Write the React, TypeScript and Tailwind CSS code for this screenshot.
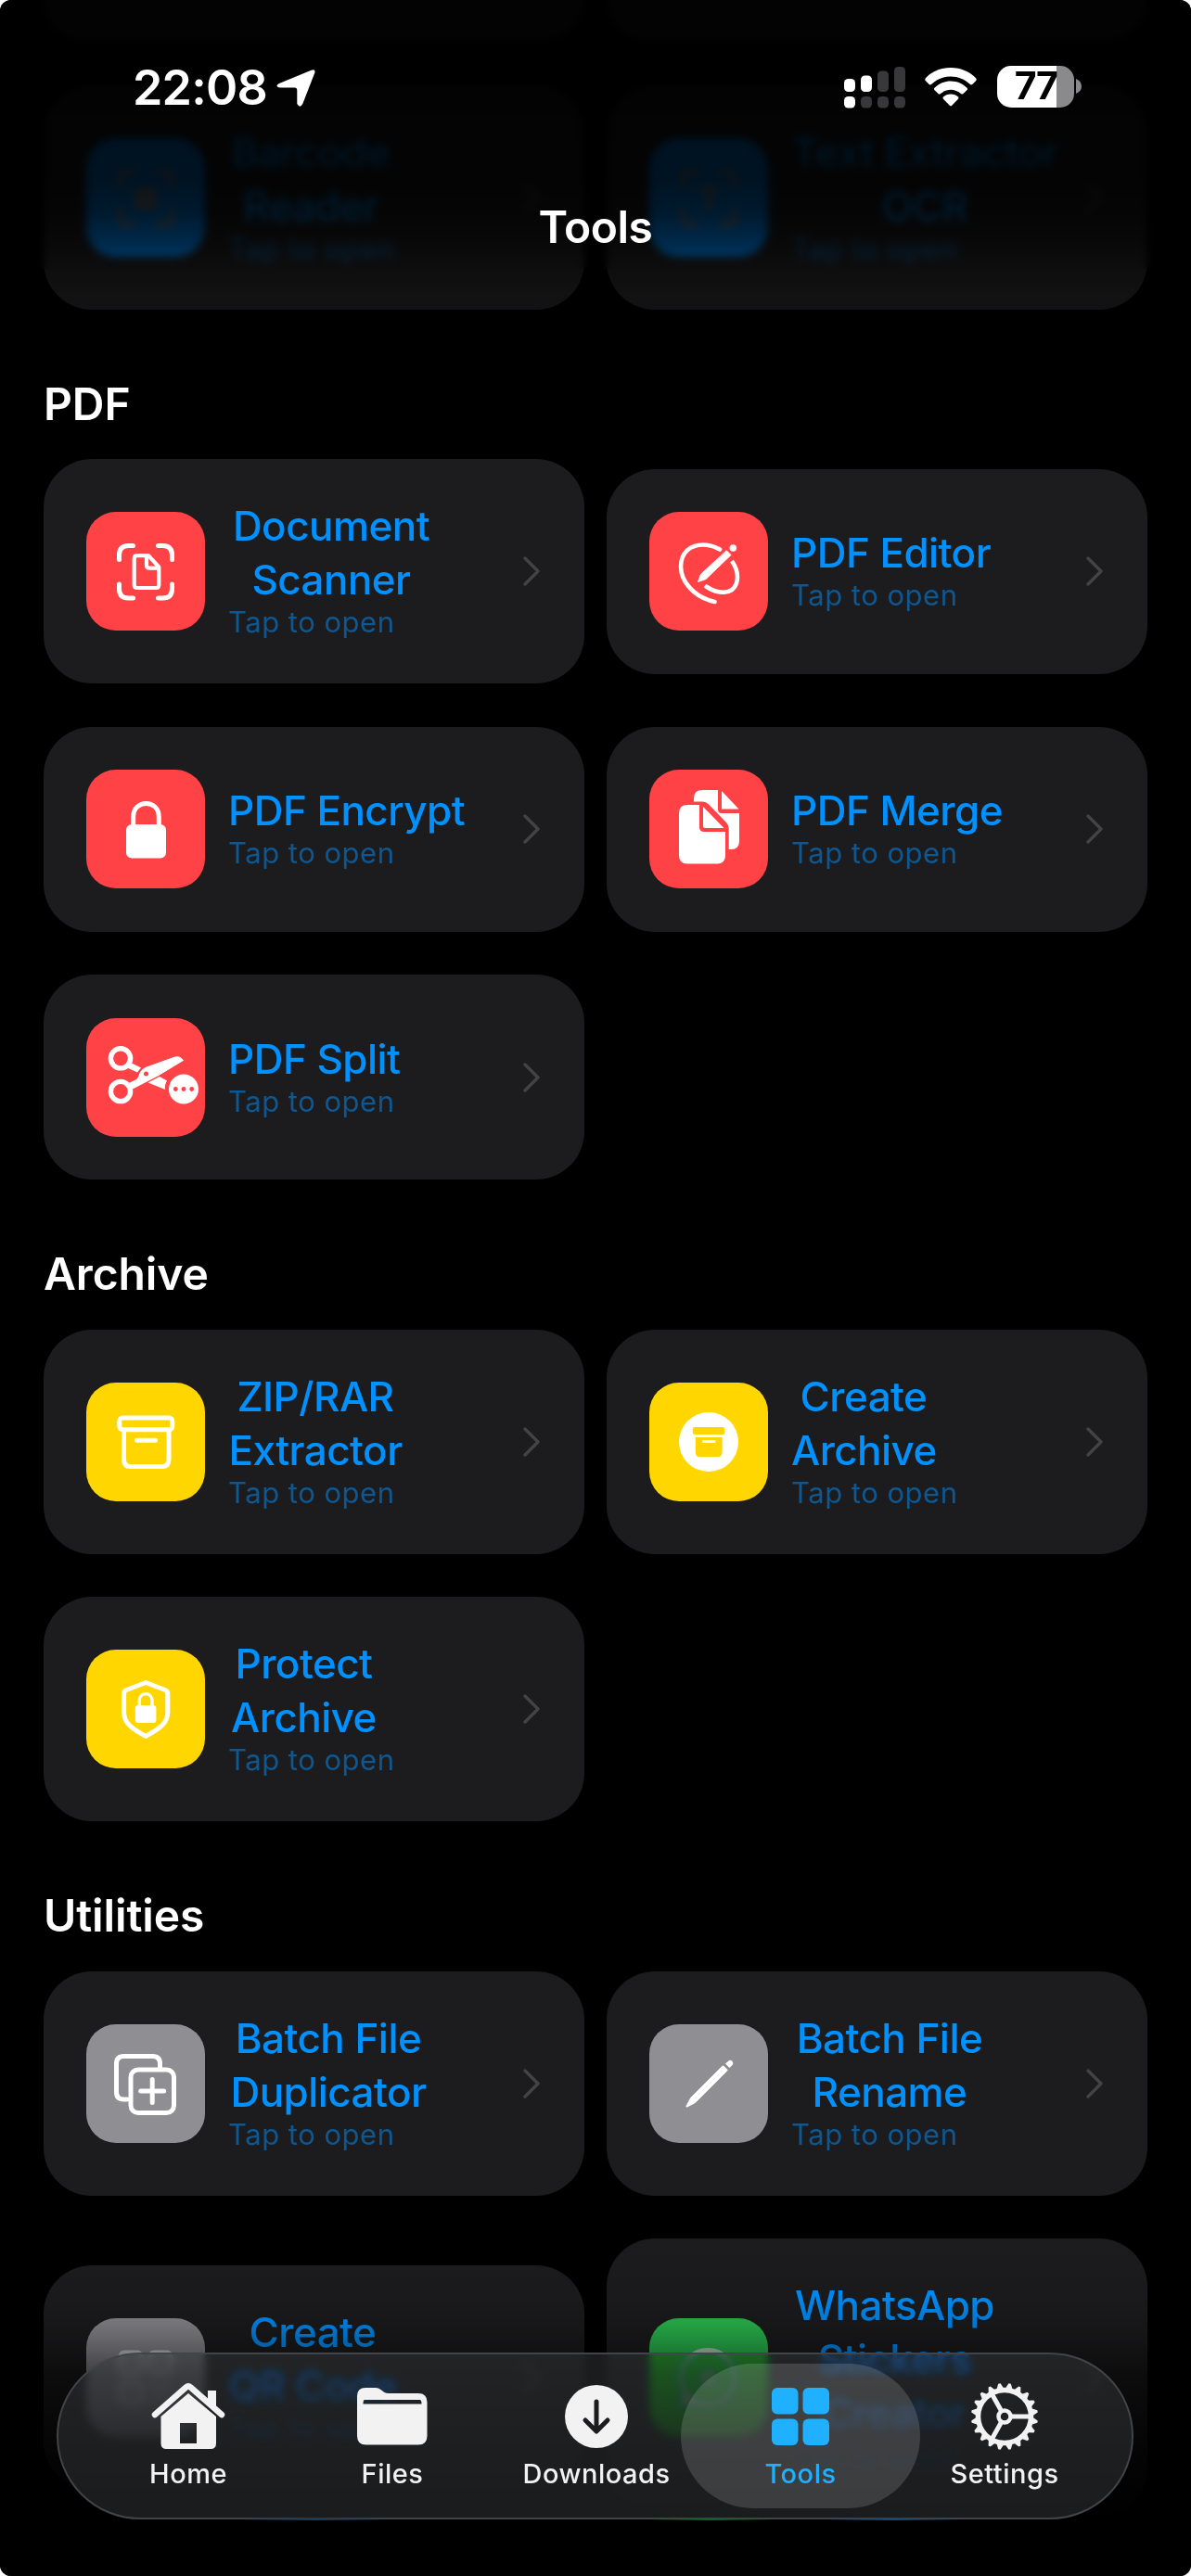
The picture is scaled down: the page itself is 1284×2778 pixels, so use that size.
import React from 'react'

const Scanner = () => (
  <g fill="none" stroke="white" strokeWidth="5" strokeLinecap="round" strokeLinejoin="round">
    <path d="M35.5 51.5V46.5Q35.5 36.5 45.5 36.5H50.5M77.5 36.5H82.5Q92.5 36.5 92.5 46.5V51.5M92.5 78V83Q92.5 93 82.5 93H77.5M50.5 93H45.5Q35.5 93 35.5 83V78" />
    <path strokeWidth="4.2" d="M65 47.2H55Q51.7 47.2 51.7 50.5V78.7Q51.7 82 55 82H75Q78.3 82 78.3 78.7V59.5L67 47.2ZM65 47.5V57.5Q65 60.7 68.2 60.7H78" />
  </g>
)

const Editor = () => (
  <g fill="none" stroke="white" strokeWidth="4.6" strokeLinecap="round">
    <path d="M70.5 97C48 92 34 75 34 59C34 44 44 35.5 58 35.5C65 35.5 71 37.5 76 40.5" />
    <path d="M89 53C94 60 96.5 68 94 77C90 89 74 90 60 79.5" strokeLinecap="butt" />
    <path d="M83.5 42L88 46.5L61 72.5L52.5 75.5L55.5 67.5Z" fill="white" strokeWidth="1" strokeLinejoin="round" />
    <circle cx="90.3" cy="39" r="3.8" fill="white" stroke="none" />
  </g>
)

const Lock = () => (
  <g>
    <rect x="43" y="59" width="43" height="36.5" rx="6" fill="white" />
    <path d="M50.7 61V51C50.7 31.5 78.3 31.5 78.3 51V61" fill="none" stroke="white" strokeWidth="5" />
  </g>
)

const Merge = () => (
  <g fill="white">
    <path d="M48 34.5V31Q48 22 57 22H74V43Q74 47 78 47H97V77Q97 86 88 86H85.7V63.5Q85.7 60 83 57L64 37.5Q61 34.3 57 34.5Z" />
    <path d="M78 23L96.5 42.5H78Z" />
    <path d="M41 38H54V62Q54 67 59 67H82V92.5Q82 101.5 73 101.5H41Q32 101.5 32 92.5V47Q32 38 41 38Z" />
    <path d="M58 40L80.5 63H60Q58 63 58 61Z" />
  </g>
)

const Split = () => (
  <g>
    <g fill="none" stroke="white" strokeWidth="5.4">
      <circle cx="37" cy="43.3" r="10.6" />
      <circle cx="37" cy="79" r="10.6" />
    </g>
    <path
      d="M45 71L54 66.5Q56 65.5 57 62Q58.5 55.5 65 53L95 42.2Q101 40.5 104.5 45.5L78 61.5L48 77Z"
      fill="white"
      stroke="white"
      strokeLinejoin="round"
    />
    <path d="M46 47L59 53.5L55 58.5L43 53Z" fill="white" />
    <path d="M66.5 69.5L79 63L87 67.5Q84.5 71 85 77Z" fill="white" />
    <circle cx="64.5" cy="60" r="2.5" fill="#ff4245" />
    <circle cx="105" cy="76.5" r="16" fill="white" />
    <g fill="#ff4245">
      <circle cx="96.3" cy="76.5" r="2.4" />
      <circle cx="105" cy="76.5" r="2.4" />
      <circle cx="113.7" cy="76.5" r="2.4" />
    </g>
  </g>
)

const Box = () => (
  <g fill="none" stroke="white" strokeWidth="5" strokeLinecap="round">
    <rect x="35.8" y="38" width="57" height="12.8" rx="3.5" />
    <path d="M40.5 52V83Q40.5 90.5 48 90.5H81.5Q89 90.5 89 83V52M54.5 62.3H74.5" />
  </g>
)

const BoxCircle = () => (
  <g>
    <circle cx="64" cy="64" r="32" fill="white" />
    <g fill="#ffd600">
      <rect x="46.8" y="48" width="34.5" height="8" rx="2.5" />
      <path d="M49.8 59H78.6V75Q78.6 80.3 73.3 80.3H55Q49.8 80.3 49.8 75Z" />
    </g>
    <rect x="57" y="62" width="14.5" height="3" rx="1.2" fill="white" />
  </g>
)

const ShieldLock = () => (
  <g>
    <path
      d="M64.2 35.5L85 43.5Q87.8 44.6 87.8 47.5V68C87.8 82 73 88 64.2 93.5C55.5 88 40.6 82 40.6 68V47.5Q40.6 44.6 43.4 43.5Z"
      fill="none"
      stroke="white"
      strokeWidth="5"
      strokeLinejoin="round"
    />
    <rect x="52.8" y="60" width="22.6" height="19" rx="3" fill="white" />
    <path d="M57.2 61V55.5C57.2 45 71 45 71 55.5V61" fill="none" stroke="white" strokeWidth="3.3" />
  </g>
)

const Duplicate = () => (
  <g fill="none" stroke="white" strokeWidth="5" strokeLinecap="round">
    <path d="M44 81H40.5Q32.5 81 32.5 73V42.5Q32.5 34.5 40.5 34.5H71.5Q79.5 34.5 79.5 42.5V46" />
    <rect x="48" y="49" width="46.5" height="46.5" rx="8" />
    <path d="M71.2 59.5V84.5M58.7 72H83.7" />
  </g>
)

const Pencil = () => (
  <g fill="white" stroke="white" strokeLinejoin="round">
    <path d="M79.5 45.5L83.5 49.5L49 84L40.5 88.5L45 80Z" strokeWidth="2" />
    <path d="M83 42.5L86 40Q87.5 39 89 40.5Q90.2 42 89 43.5L86.5 46Z" strokeWidth="1.5" />
  </g>
)

const QrCode = () => (
  <g fill="none" stroke="#d0d0d2" strokeWidth="5">
    <rect x="37" y="37" width="22" height="22" rx="4" />
    <rect x="69" y="37" width="22" height="22" rx="4" />
    <rect x="37" y="69" width="22" height="22" rx="4" />
    <path d="M46 48h4M78 48h4M46 80h4M69 72h6M84 72h6M76 80h7M69 89h6M84 89h6" />
  </g>
)

const Chat = () => (
  <g>
    <circle cx="63" cy="64" r="29" fill="none" stroke="#b9d8c0" strokeWidth="6" />
    <path d="M36 80L32 97L49 92Z" fill="#b9d8c0" />
    <circle cx="63" cy="64" r="12" fill="#7fc891" />
  </g>
)

const BarcodeScan = () => (
  <g fill="none" stroke="#6f7f8c" strokeWidth="6" strokeLinecap="round">
    <path d="M36 52V44Q36 36 44 36H50M78 36H84Q92 36 92 44V52M92 77V85Q92 93 84 93H78M50 93H44Q36 93 36 85V77" />
    <rect x="55" y="56" width="18" height="18" fill="#6f7f8c" />
  </g>
)

const TextScan = () => (
  <g fill="none" stroke="#6f7f8c" strokeWidth="6" strokeLinecap="round">
    <path d="M36 52V44Q36 36 44 36H50M78 36H84Q92 36 92 44V52M92 77V85Q92 93 84 93H78M50 93H44Q36 93 36 85V77" />
    <path d="M54 54H74M64 54V76" />
  </g>
)

type Tool = {
  lines: string[]
  width?: string
  color: string
  icon: () => React.ReactElement
}

const scanTools: Tool[] = [
  { lines: ['Barcode', 'Reader'], width: 'w-[178px]', color: 'bg-[#0080e8]', icon: BarcodeScan },
  { lines: ['Text Extractor', 'OCR'], width: 'w-[288px]', color: 'bg-[#0080e8]', icon: TextScan },
]

const sections: { title: string; tools: Tool[] }[] = [
  {
    title: 'PDF',
    tools: [
      { lines: ['Document', 'Scanner'], width: 'w-[222px]', color: 'bg-[#ff4245]', icon: Scanner },
      { lines: ['PDF Editor'], color: 'bg-[#ff4245]', icon: Editor },
      { lines: ['PDF Encrypt'], color: 'bg-[#ff4245]', icon: Lock },
      { lines: ['PDF Merge'], color: 'bg-[#ff4245]', icon: Merge },
      { lines: ['PDF Split'], color: 'bg-[#ff4245]', icon: Split },
    ],
  },
  {
    title: 'Archive',
    tools: [
      { lines: ['ZIP/RAR', 'Extractor'], width: 'w-[188px]', color: 'bg-[#ffd600]', icon: Box },
      { lines: ['Create', 'Archive'], width: 'w-[156px]', color: 'bg-[#ffd600]', icon: BoxCircle },
      { lines: ['Protect', 'Archive'], width: 'w-[163px]', color: 'bg-[#ffd600]', icon: ShieldLock },
    ],
  },
  {
    title: 'Utilities',
    tools: [
      { lines: ['Batch File', 'Duplicator'], width: 'w-[216px]', color: 'bg-[#8e8e93]', icon: Duplicate },
      { lines: ['Batch File', 'Rename'], width: 'w-[212px]', color: 'bg-[#8e8e93]', icon: Pencil },
      { lines: ['Create', 'QR Code'], width: 'w-[182px]', color: 'bg-[#8e8e93]', icon: QrCode },
      { lines: ['WhatsApp', 'Stickers', 'Creator'], width: 'w-[223px]', color: 'bg-[#2cc452]', icon: Chat },
    ],
  },
]

function ToolCard({ tool }: { tool: Tool }) {
  const Icon = tool.icon
  return (
    <div className="flex min-h-[221px] items-center rounded-[52px] bg-[#1c1c1e] px-[46px] py-[46px]">
      <div className={`size-32 shrink-0 rounded-[32px] ${tool.color}`}>
        <svg viewBox="0 0 128 128" className="size-32">
          <Icon />
        </svg>
      </div>
      <div className="-mt-[3px] mb-[3px] ml-[25px] flex-1 whitespace-nowrap">
        <div className={`text-[44px] leading-[58px] font-medium tracking-[-0.55px] text-[#0091ff] ${tool.width ? `text-center ${tool.width}` : ''}`}>
          {tool.lines.map((line) => (
            <div key={line}>{line}</div>
          ))}
        </div>
        <div className="text-[31px] leading-[34px] tracking-[0.5px] text-[#0f5790]">Tap to open</div>
      </div>
      <svg viewBox="0 0 20 32" className="h-8 w-5 shrink-0" fill="none" stroke="#434346" strokeWidth="3.4" strokeLinecap="round" strokeLinejoin="round">
        <path d="M2 2L16 16L2 30" />
      </svg>
    </div>
  )
}

function StatusBar() {
  return (
    <div className="flex h-[140px] items-start pt-[66px] text-white">
      <span className="ml-[143px] text-[52px] leading-[58px] font-semibold tracking-[-0.8px]">22:08</span>
      <svg viewBox="0 0 42 40" className="mt-[9px] ml-2.5 h-10 w-[42px]" fill="white">
        <path d="M37.500 .8Q42.500 -1.200 41.300 3.500L28.500 36.500Q25.500 42.500 22.300 37V22Q22.300 19.500 20 19.500H4Q-2.500 18 3 15Z" />
      </svg>
      <svg viewBox="0 0 68 46" className="mt-[4.5px] ml-auto h-[46px] w-[68px]">
        <g fill="white">
          <rect x="1" y="14" width="12" height="14" rx="4.500" />
          <rect x="19" y="10.5" width="12" height="17.5" rx="4.500" />
          <rect x="1" y="33" width="12" height="12.5" rx="4.500" />
        </g>
        <g fill="#38383a">
          <rect x="37" y="5.5" width="12" height="22.5" rx="4.500" />
          <rect x="55" y="1" width="12" height="27" rx="4.500" />
          <rect x="19" y="33" width="12" height="12.5" rx="4.500" />
          <rect x="37" y="33" width="12" height="12.5" rx="4.500" />
          <rect x="55" y="33" width="12" height="12.5" rx="4.500" />
        </g>
      </svg>
      <svg viewBox="0 0 56 42" className="mt-[7px] ml-5 h-[42px] w-14" fill="white">
        <path d="M28 0C39 0 49 4.5 55.3 11.5Q56.3 13 55 14.3L51.3 18Q50 19 48.700 17.8C43 12.500 36 9.500 28 9.500S13 12.500 7.300 17.800Q6 19 4.700 18L1 14.300Q-.3 13 .7 11.500C7 4.500 17 0 28 0Z" />
        <path d="M28 14.500C35 14.500 41 17.300 45.500 21.700Q46.500 23 45.400 24.200L41.500 28Q40.300 29 39 28C36 25.500 32 23.800 28 23.800S20 25.500 17 28Q15.700 29 14.500 28L10.600 24.200Q9.500 23 10.500 21.700C15 17.300 21 14.500 28 14.500Z" />
        <path d="M28 28.500C31.300 28.500 34 29.600 36 31.500Q37 32.600 36 33.700L29.200 40.700Q28 41.700 26.800 40.700L20 33.700Q19 32.600 20 31.500C22 29.600 24.700 28.500 28 28.500Z" />
      </svg>
      <div className="mt-[4.5px] ml-[22px] flex h-[45px] w-[83px] items-center justify-center rounded-[15px] bg-linear-to-r from-white from-77% to-[#8a8a8c] to-77% text-[41px] font-bold tracking-[-1.5px] text-black">
        77
      </div>
      <svg viewBox="0 0 6 16" className="mt-[19px] mr-[118px] ml-0.5 h-4 w-1.5" fill="#8a8a8c">
        <path d="M0 0Q6 2.500 6 8T0 16Z" />
      </svg>
    </div>
  )
}

const HomeIcon = () => (
  <svg viewBox="0 0 80 72" className="h-[72px] w-20">
    <path d="M61 8H70V28L61 19Z" fill="#f2f2f3" />
    <path d="M4 34L37.500 4.500Q40 2.300 42.500 4.500L76 34" fill="none" stroke="#f2f2f3" strokeWidth="6.500" strokeLinecap="round" />
    <path d="M10.500 36L40 11L70 36V65Q70 71 64 71H16.500Q10.500 71 10.500 65ZM31 43V65H49V43Z" fill="#f2f2f3" fillRule="evenodd" />
  </svg>
)

const FilesIcon = () => (
  <svg viewBox="0 0 76 62" className="h-[62px] w-[76px]" fill="#f2f2f3">
    <path d="M9 0H20Q23 0 25.500 2L29 4.800Q31 6 34 6H66Q75.500 6 75.500 15.500V52Q75.500 61.500 66 61.500H9.500Q0 61.500 0 52V9Q0 0 9 0ZM8 13Q6.500 13 6.500 17.500H69.500Q69.500 13 67.500 13Z" fillRule="evenodd" />
  </svg>
)

const DownloadsIcon = () => (
  <svg viewBox="0 0 68 68" className="size-[68px]">
    <circle cx="34" cy="34" r="34" fill="#f2f2f3" />
    <path d="M34 18V49M22 38L34 50L46 38" fill="none" stroke="#1c1c1e" strokeWidth="5" strokeLinecap="round" strokeLinejoin="round" />
  </svg>
)

const ToolsIcon = () => (
  <svg viewBox="0 0 62 62" className="size-[62px]" fill="#1fb0ff">
    <rect width="28.500" height="28.500" rx="6" />
    <rect x="33.500" width="28.500" height="28.500" rx="6" />
    <rect y="33.500" width="28.500" height="28.500" rx="6" />
    <rect x="33.500" y="33.500" width="28.500" height="28.500" rx="6" />
  </svg>
)

const SettingsIcon = () => (
  <svg viewBox="-37 -37 74 74" className="size-[74px]" fill="none" stroke="#f2f2f3">
    <circle r="28.500" strokeWidth="5.500" />
    {Array.from({ length: 20 }, (_, i) => (
      <path key={i} d="M-4 -30L-1.200 -36H1.200L4 -30Z" fill="#f2f2f3" stroke="none" transform={`rotate(${i * 18 + 9})`} />
    ))}
    <circle r="6.500" strokeWidth="4.500" />
    <path d="M8 0H27M-4 -7L-13.500 -24M-4 7L-13.500 24" strokeWidth="5" />
  </svg>
)

const tabs = [
  { label: 'Home', icon: HomeIcon },
  { label: 'Files', icon: FilesIcon },
  { label: 'Downloads', icon: DownloadsIcon },
  { label: 'Tools', icon: ToolsIcon, active: true },
  { label: 'Settings', icon: SettingsIcon },
]

function TabBar() {
  return (
    <nav className="absolute top-[2537px] left-[61px] flex h-[180px] w-[1161px] items-center justify-center rounded-full border-[2.5px] border-[#424447] bg-[#35373a]/50 pl-[3px] backdrop-blur-[5px] backdrop-saturate-200">
      {tabs.map(({ label, icon: Icon, active }) => (
        <div
          key={label}
          className={`-mx-[19px] flex h-[156px] w-[258px] flex-col items-center rounded-full ${active ? 'bg-white/15 text-[#1fb0ff]' : 'text-[#f2f2f3]'}`}
        >
          <div className="mt-5 flex h-[74px] items-center justify-center">
            <Icon />
          </div>
          <span className="mt-[5px] text-[29px] leading-[40px] font-medium tracking-[0.5px]">{label}</span>
        </div>
      ))}
      {/* reflections on the lower rim */}
      <div className="absolute -bottom-[2.5px] left-[635px] h-[3px] w-[135px] bg-linear-to-r from-transparent via-[#0b6420] to-transparent" />
      <div className="absolute -bottom-[2.5px] left-[825px] h-[3px] w-[150px] bg-linear-to-r from-transparent via-[#124a78] to-transparent" />
      <div className="absolute -bottom-[2.5px] left-[190px] h-[3px] w-[170px] bg-linear-to-r from-transparent via-[#163c5c] to-transparent" />
    </nav>
  )
}

export default function App() {
  return (
    <div className="bg-white">
      <div className="relative h-[2778px] w-[1284px] overflow-hidden rounded-[12px] bg-black font-['Inter','Liberation_Sans',sans-serif]">
        <main className="px-[47px]">
          <div className="grid grid-cols-2 gap-x-6">
            <div className="h-11 rounded-b-[52px] bg-[#1c1c1e]" />
            <div className="h-11 rounded-b-[52px] bg-[#1c1c1e]" />
          </div>
          <div className="mt-[47.5px] grid grid-cols-2 items-center gap-x-6">
            {scanTools.map((tool) => (
              <ToolCard key={tool.lines.join(' ')} tool={tool} />
            ))}
          </div>
          {sections.map((section) => (
            <section key={section.title}>
              <h2 className="pt-[72px] pb-[29.5px] text-[48px] leading-[60px] font-semibold tracking-[-0.1px] text-white">
                {section.title}
              </h2>
              <div className="grid grid-cols-2 items-center gap-x-6 gap-y-[46.5px]">
                {section.tools.map((tool) => (
                  <ToolCard key={tool.lines.join(' ')} tool={tool} />
                ))}
              </div>
            </section>
          ))}
        </main>

        {/* content scrolls under the header and the tab bar */}
        <div className="absolute inset-x-0 top-0 h-[290px] backdrop-blur-[4px]" />
        <div className="absolute inset-x-0 top-0 h-[345px] bg-[linear-gradient(to_bottom,rgba(0,0,0,0.88)_0px,rgba(0,0,0,0.85)_195px,rgba(0,0,0,0.8)_230px,rgba(0,0,0,0.68)_262px,rgba(0,0,0,0.5)_290px,rgba(0,0,0,0.34)_318px,rgba(0,0,0,0.32)_345px)]" />
        <div className="absolute inset-x-0 top-[2400px] bottom-0 bg-[linear-gradient(to_bottom,rgba(0,0,0,0)_0px,rgba(0,0,0,0.08)_80px,rgba(0,0,0,0.2)_110px,rgba(0,0,0,0.38)_137px,rgba(0,0,0,0.55)_160px,rgba(0,0,0,0.82)_240px,rgba(0,0,0,1)_320px)]" />

        <header className="absolute inset-x-0 top-0">
          <StatusBar />
          <h1 className="mt-[75px] text-center text-[48px] leading-[60px] font-semibold tracking-[-0.5px] text-white">Tools</h1>
        </header>
        <TabBar />
      </div>
    </div>
  )
}
